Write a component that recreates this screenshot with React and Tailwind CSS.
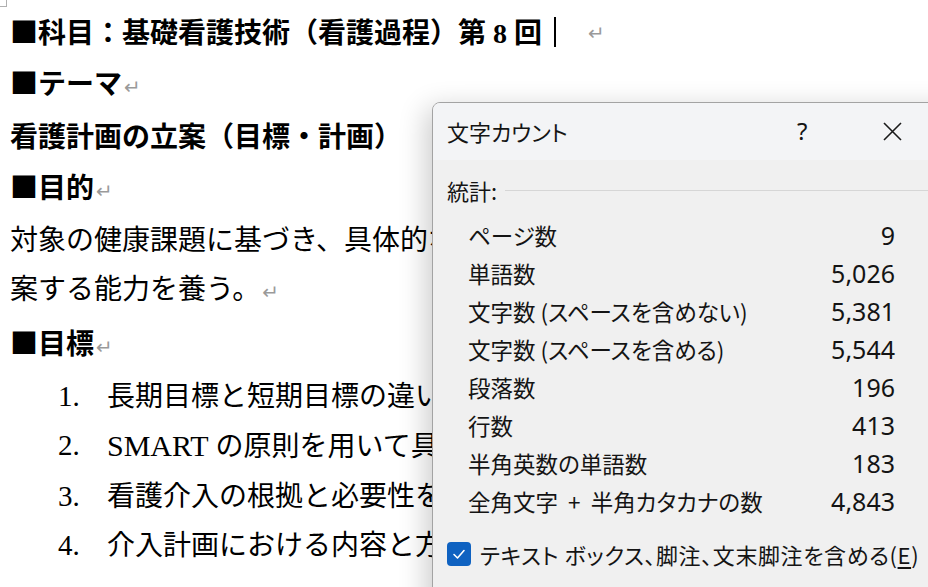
import React from 'react'

const docFont = "font-['Liberation_Serif','Noto_Sans_CJK_JP',serif]"
const uiFont = "font-['Noto_Sans_CJK_JP','Noto_Sans',sans-serif]"

const Mark = () => (
  <span className="text-[#9a9a9a] text-[20px] font-normal font-['DejaVu_Sans',sans-serif] ml-[2px]">↵</span>
)

const Sq = () => <span className="font-['Noto_Sans_CJK_JP',sans-serif]">■</span>

const stats = [
  { label: 'ページ数', value: '9' },
  { label: '単語数', value: '5,026' },
  { label: '文字数 (スペースを含めない)', value: '5,381' },
  { label: '文字数 (スペースを含める)', value: '5,544' },
  { label: '段落数', value: '196' },
  { label: '行数', value: '413' },
  { label: '半角英数の単語数', value: '183' },
  { label: '全角文字 + 半角カタカナの数', value: '4,843' },
]

const goals = [
  '長期目標と短期目標の違いを理解する',
  <><span className="text-[30px]">SMART</span> の原則を用いて具体的な目標を設定できる</>,
  '看護介入の根拠と必要性を説明できる',
  '介入計画における内容と方法を記述できる',
]

export default function App() {
  return (
    <div className="relative w-[928px] h-[587px] overflow-hidden bg-white">
      {/* margin corner mark */}
      <div className="absolute left-0 top-0 w-[7px] h-[7px] border-r border-b border-[#b0b0b0]"></div>

      {/* Document */}
      <div className={`${docFont} text-[28px] leading-[49.3px] text-black pl-[10px] pt-[6px] whitespace-nowrap`}>
        <div className="font-bold flex items-center">
          <span><Sq />科目：基礎看護技術（看護過程）第 8 回</span>
          <span className="inline-block w-[2px] h-[30px] bg-black ml-[12px]"></span>
          <span className="ml-[30px]"><Mark /></span>
        </div>
        <div className="font-bold"><Sq />テーマ<Mark /></div>
        <div className="font-bold">看護計画の立案（目標・計画）</div>
        <div className="font-bold"><Sq />目的<Mark /></div>
        <div>対象の健康課題に基づき、具体的な看護目標と看護計画を立</div>
        <div>案する能力を養う。<Mark /></div>
        <div className="font-bold"><Sq />目標<Mark /></div>
        {goals.map((g, i) => (
          <div key={i} className="flex pl-[48px]">
            <span className="w-[49px] text-[29px]">{i + 1}.</span>
            <span>{g}</span>
          </div>
        ))}
        <div><Mark /></div>
      </div>

      {/* Word count dialog */}
      <div className={`${uiFont} absolute left-[432px] top-[102px] w-[540px] h-[520px] bg-[#f0f0f0] border border-[#a3a3a3] rounded-tl-[8px] overflow-hidden shadow-[-6px_6px_28px_rgba(0,0,0,0.2)] text-[#141414] [font-feature-settings:'palt']`}>
        <div className="h-[57px] bg-[#f3f4f6] flex items-center pl-[14px] relative">
          <span className="text-[22px]">文字カウント</span>
          <span className="absolute left-[364px] top-[13px] text-[24px] leading-[30px] font-['Noto_Sans',sans-serif]">?</span>
          <svg className="absolute left-[450px] top-[19px]" width="19" height="19" viewBox="0 0 19 19">
            <path d="M1 1 L18 18 M18 1 L1 18" stroke="#1a1a1a" strokeWidth="1.6" fill="none" />
          </svg>
        </div>
        <div className="pt-[15px] pl-[14px]">
          <div className="flex items-center h-[30px]">
            <span className="text-[22px]">統計:</span>
            <div className="flex-1 h-px bg-[#d6d6d6] ml-[8px]"></div>
          </div>
          <div className="mt-[12px] pl-[21px] w-[448px]">
            {stats.map((s) => (
              <div key={s.label} className="flex justify-between items-center h-[38px] text-[22.5px]">
                <span className="whitespace-pre">{s.label.replace(' + ', '  +  ')}</span>
                <span className="text-[25px] font-['Noto_Sans',sans-serif]">{s.value}</span>
              </div>
            ))}
          </div>
          <div className="flex items-center mt-[20px] h-[26px]">
            <div className="w-[24px] h-[24px] rounded-[4px] bg-[#0f62c1] flex items-center justify-center">
              <svg width="14" height="14" viewBox="0 0 14 14">
                <path d="M2 7.5 L5.5 11 L12 3.5" stroke="white" strokeWidth="1.6" fill="none" strokeLinecap="round" strokeLinejoin="round" />
              </svg>
            </div>
            <span className="ml-[9px] text-[22px] tracking-[0.6px]">
              テキスト ボックス、脚注、文末脚注を含める(<span className="underline underline-offset-[3px]">E</span>)
            </span>
          </div>
        </div>
      </div>
    </div>
  )
}
